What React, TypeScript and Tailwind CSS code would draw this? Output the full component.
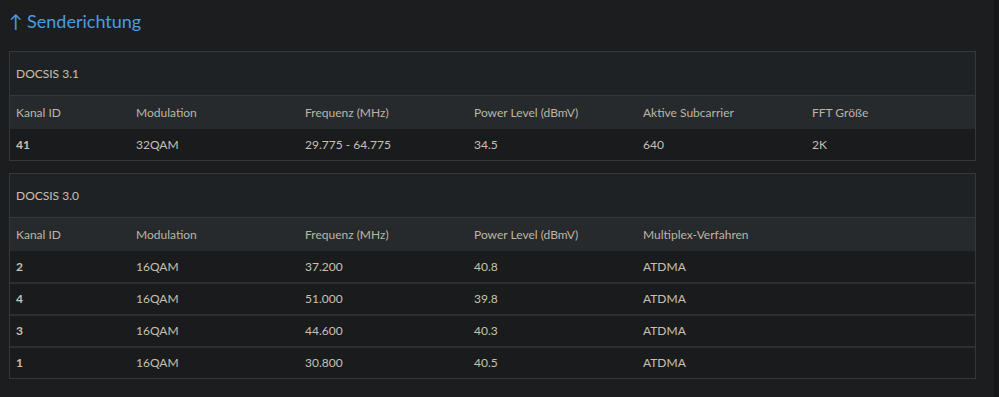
const upstream31 = {
  caption: 'DOCSIS 3.1',
  head: ['Kanal ID', 'Modulation', 'Frequenz (MHz)', 'Power Level (dBmV)', 'Aktive Subcarrier', 'FFT Größe'],
  rows: [['41', '32QAM', '29.775 - 64.775', '34.5', '640', '2K']],
}

const upstream30 = {
  caption: 'DOCSIS 3.0',
  head: ['Kanal ID', 'Modulation', 'Frequenz (MHz)', 'Power Level (dBmV)', 'Multiplex-Verfahren', ''],
  rows: [
    ['2', '16QAM', '37.200', '40.8', 'ATDMA', ''],
    ['4', '16QAM', '51.000', '39.8', 'ATDMA', ''],
    ['3', '16QAM', '44.600', '40.3', 'ATDMA', ''],
    ['1', '16QAM', '30.800', '40.5', 'ATDMA', ''],
  ],
}

const cols = 'grid grid-cols-[120px_169px_169px_169px_169px_169px]'

function ChannelTable({ data }: { data: typeof upstream31 }) {
  return (
    <div className="w-[967px] border border-[#35383a] bg-[#1f2224]">
      <div className="h-[43px] flex items-center px-[6px] text-[#c8c1b1]">{data.caption}</div>
      <div className={`${cols} h-[34px] items-center bg-[#272a2c] border-t border-[#35383a] text-[#bcb5a6]`}>
        {data.head.map((h, i) => (
          <div key={i} className="px-[6px]">{h}</div>
        ))}
      </div>
      {data.rows.map((r, ri) => (
        <div
          key={ri}
          className={`${cols} items-center bg-[#1a1b1d] text-[#c8c1b1] ${ri > 0 ? 'h-[32px] border-t-2 border-[#2c2f31]' : 'h-[31px]'}`}
        >
          {r.map((c, i) => (
            <div key={i} className={`px-[6px] ${i === 0 ? 'font-bold' : ''}`}>{c}</div>
          ))}
        </div>
      ))}
    </div>
  )
}

export default function App() {
  return (
    <div className="w-[999px] h-[397px] bg-[#1c1d1f] flex" style={{ fontFamily: 'Lato, "Open Sans", sans-serif' }}>
      <div className="flex-1 pl-[9px] pt-[8px] text-[12px]">
        <h2 className="text-[18px] leading-[26px] text-[#4a9de0] mb-[17px]">↑ Senderichtung</h2>
        <div className="flex flex-col gap-[12px]">
          <ChannelTable data={upstream31} />
          <ChannelTable data={upstream30} />
        </div>
      </div>
      <div className="w-[5px] bg-[#151617]" />
    </div>
  )
}
